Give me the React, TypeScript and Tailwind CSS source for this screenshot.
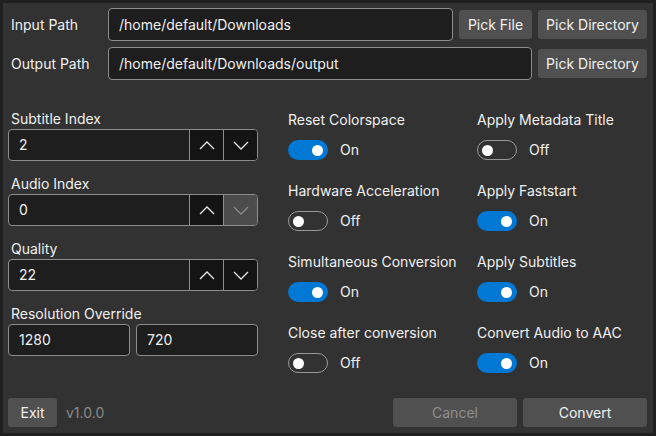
import React from "react";

const Chevron = ({ up, dim }: { up?: boolean; dim?: boolean }) => (
  <svg width="16" height="9" viewBox="0 0 16 9" fill="none">
    <polyline
      points={up ? "1,8 8,1 15,8" : "1,1 8,8 15,1"}
      stroke={dim ? "#8a8a8a" : "#e8e8e8"}
      strokeWidth="1.3"
    />
  </svg>
);

const Spin = ({ label, value, downDisabled }: { label: string; value: string; downDisabled?: boolean }) => (
  <div className="flex flex-col">
    <div className="h-[20px] pl-[3px] leading-[20px]">{label}</div>
    <div className="flex h-[32px] rounded-[4px] border border-[#8d8d8d] bg-[#1e1e1e] overflow-hidden">
      <div className="flex-1 pl-[10px] leading-[30px]">{value}</div>
      <div className="w-[34px] border-l border-[#8d8d8d] bg-[#141414] flex items-center justify-center">
        <Chevron up />
      </div>
      <div
        className={
          "w-[34px] border-l border-[#8d8d8d] flex items-center justify-center " +
          (downDisabled ? "bg-[#4c4c4c]" : "bg-[#141414]")
        }
      >
        <Chevron dim={downDisabled} />
      </div>
    </div>
  </div>
);

const Toggle = ({ label, on }: { label: string; on: boolean }) => (
  <div className="flex flex-col h-[50px]">
    <div className="h-[20px] leading-[20px]">{label}</div>
    <div className="mt-[10px] flex items-center gap-[12px]">
      {on ? (
        <div className="w-[40px] h-[20px] rounded-full bg-[#0078d4] flex items-center justify-end pr-[5px]">
          <div className="w-[11px] h-[11px] rounded-full bg-white" />
        </div>
      ) : (
        <div className="w-[40px] h-[20px] rounded-full border border-[#9a9a9a] flex items-center pl-[4px]">
          <div className="w-[11px] h-[11px] rounded-full bg-white" />
        </div>
      )}
      <span className="leading-[20px]">{on ? "On" : "Off"}</span>
    </div>
  </div>
);

const Btn = ({ children, w, disabled }: { children: React.ReactNode; w: string; disabled?: boolean }) => (
  <div
    className={
      "h-[29px] rounded-[3px] bg-[#505050] flex items-center justify-center " +
      w +
      (disabled ? " text-[#8e8e8e] bg-[#4a4a4a]" : " text-[#f0f0f0]")
    }
  >
    {children}
  </div>
);

export default function App() {
  return (
    <div
      className="w-[656px] h-[436px] bg-[#1f1f1f] p-[3px] text-[14px] text-[#f0f0f0]"
      style={{ fontFamily: "Inter, 'Noto Sans', sans-serif" }}
    >
      <div className="h-full bg-[#323232] flex flex-col pl-[5px] pr-[6px] pt-[5px] pb-[6px]">
        <div className="flex items-center h-[33px]">
          <div className="w-[100px] pl-[3px]">Input Path</div>
          <div className="flex-1 h-[33px] rounded-[4px] border border-[#8d8d8d] bg-[#1e1e1e] pl-[10px] leading-[31px]">
            /home/default/Downloads
          </div>
          <div className="ml-[6px]">
            <Btn w="w-[73px]">Pick File</Btn>
          </div>
          <div className="ml-[6px]">
            <Btn w="w-[109px]">Pick Directory</Btn>
          </div>
        </div>
        <div className="flex items-center h-[33px] mt-[6px]">
          <div className="w-[100px] pl-[3px]">Output Path</div>
          <div className="flex-1 h-[33px] rounded-[4px] border border-[#8d8d8d] bg-[#1e1e1e] pl-[10px] leading-[31px]">
            /home/default/Downloads/output
          </div>
          <div className="ml-[6px]">
            <Btn w="w-[109px]">Pick Directory</Btn>
          </div>
        </div>

        <div className="flex mt-[29px]">
          <div className="w-[250px] flex flex-col gap-[13px]">
            <Spin label="Subtitle Index" value="2" />
            <Spin label="Audio Index" value="0" downDisabled />
            <Spin label="Quality" value="22" />
            <div className="flex flex-col">
              <div className="h-[20px] pl-[3px] leading-[20px]">Resolution Override</div>
              <div className="flex gap-[6px]">
                <div className="w-[122px] h-[32px] rounded-[4px] border border-[#8d8d8d] bg-[#1e1e1e] pl-[10px] leading-[30px]">
                  1280
                </div>
                <div className="w-[122px] h-[32px] rounded-[4px] border border-[#8d8d8d] bg-[#1e1e1e] pl-[10px] leading-[30px]">
                  720
                </div>
              </div>
            </div>
          </div>
          <div className="ml-[30px] w-[189px] flex flex-col gap-[21px] pt-[1px]">
            <Toggle label="Reset Colorspace" on />
            <Toggle label="Hardware Acceleration" on={false} />
            <Toggle label="Simultaneous Conversion" on />
            <Toggle label="Close after conversion" on={false} />
          </div>
          <div className="flex-1 flex flex-col gap-[21px] pt-[1px]">
            <Toggle label="Apply Metadata Title" on={false} />
            <Toggle label="Apply Faststart" on />
            <Toggle label="Apply Subtitles" on />
            <Toggle label="Convert Audio to AAC" on />
          </div>
        </div>

        <div className="mt-auto flex items-center">
          <Btn w="w-[49px]">Exit</Btn>
          <span className="ml-[9px] text-[#8a8a8a]">v1.0.0</span>
          <div className="ml-auto flex gap-[6px]">
            <Btn w="w-[124px]" disabled>
              Cancel
            </Btn>
            <Btn w="w-[124px]">Convert</Btn>
          </div>
        </div>
      </div>
    </div>
  );
}
